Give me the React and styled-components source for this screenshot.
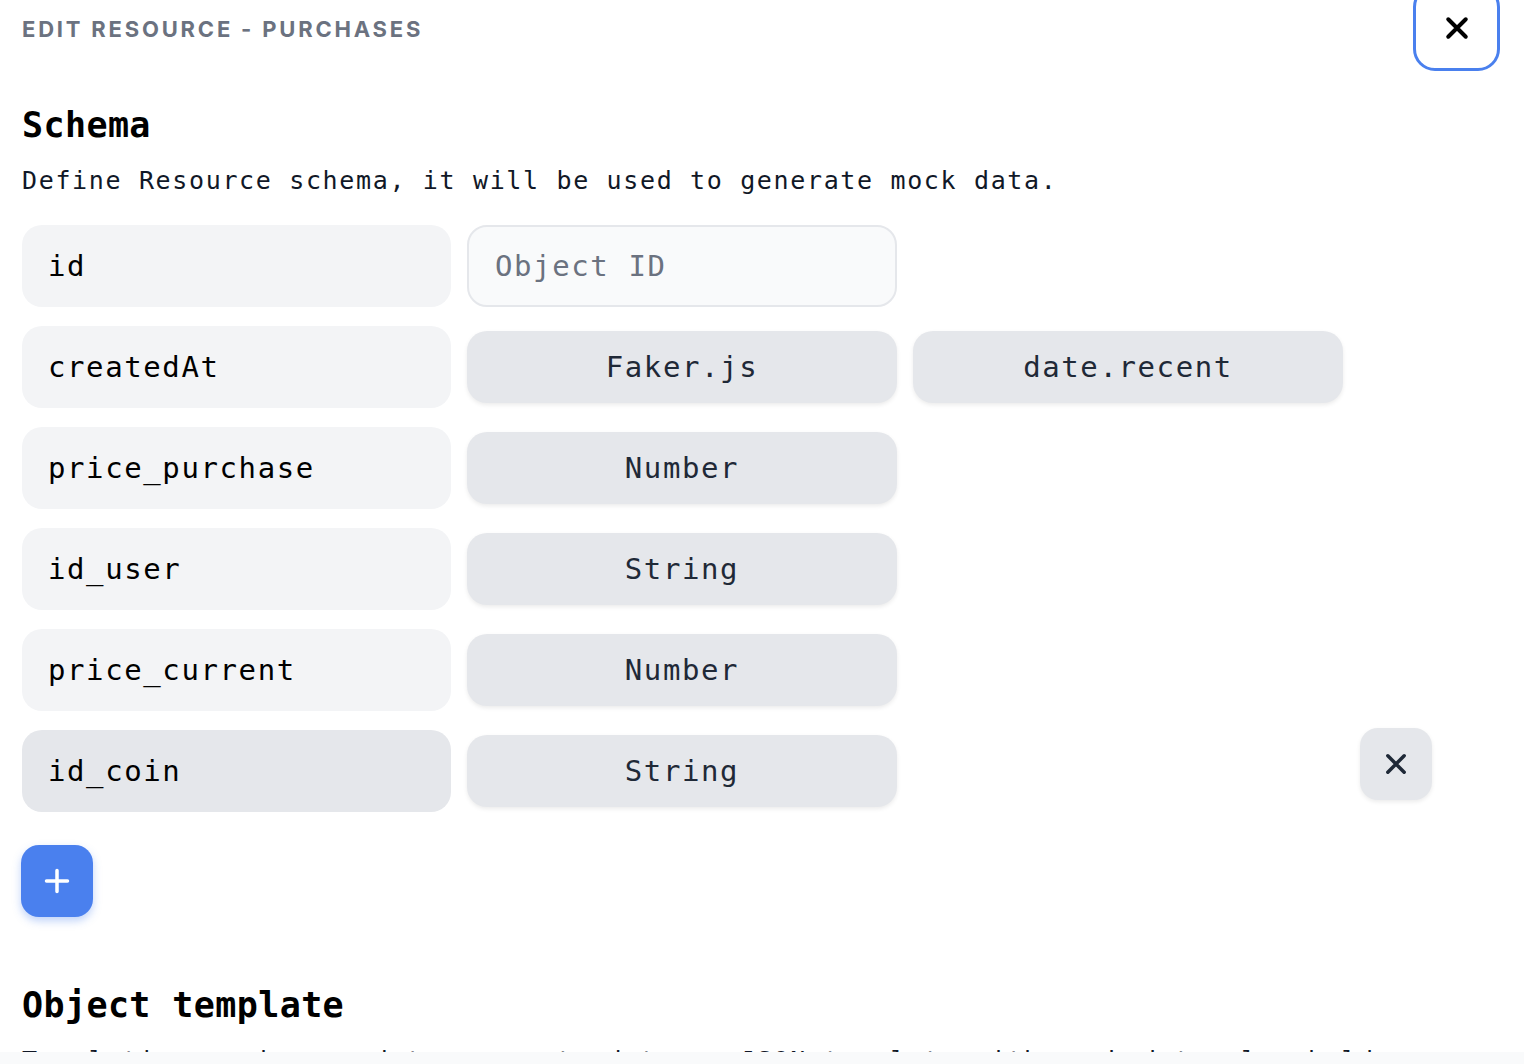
import React from "react";
import styled, { createGlobalStyle } from "styled-components";

const GlobalStyle = createGlobalStyle`
  html, body {
    margin: 0;
    padding: 0;
    background: #ffffff;
    overflow: hidden;
  }
  * {
    box-sizing: border-box;
  }
`;

const mono = `"DejaVu Sans Mono", "Liberation Mono", monospace`;

const Page = styled.div`
  padding: 0 24px 0 22px;
  font-family: ${mono};
  color: #111827;
`;

const Header = styled.div`
  display: flex;
  align-items: center;
  justify-content: space-between;
  height: 86px;
  margin-top: -15px;
`;

const Title = styled.h1`
  margin: 0;
  font-family: Inter, "Liberation Sans", sans-serif;
  font-size: 22px;
  font-weight: 700;
  letter-spacing: 2.8px;
  text-transform: uppercase;
  color: #6b7280;
  padding-top: 1px;
`;

const CloseButton = styled.button`
  width: 87px;
  height: 86px;
  border: 3px solid #4a80ee;
  border-radius: 22px;
  background: #ffffff;
  display: flex;
  align-items: center;
  justify-content: center;
  padding: 0;
  cursor: pointer;
`;

const SectionTitle = styled.h2`
  margin: ${(p) => p.$top || "0"} 0 0 0;
  font-family: ${mono};
  font-size: 35px;
  font-weight: 700;
  letter-spacing: 0.4px;
  color: #000000;
  line-height: 44px;
`;

const Description = styled.p`
  margin: 18px 0 0 0;
  font-size: 25px;
  letter-spacing: 1.65px;
  line-height: 32px;
  color: #111827;
`;

const Rows = styled.div`
  display: flex;
  flex-direction: column;
  gap: 19px;
  margin-top: 28px;
`;

const Row = styled.div`
  display: flex;
  align-items: center;
  gap: 16px;
  height: 82px;
`;

const FieldName = styled.div`
  flex: 0 0 429px;
  height: 82px;
  display: flex;
  align-items: center;
  padding: 0 26px;
  border-radius: 20px;
  background: ${(p) => (p.$active ? "#e5e7eb" : "#f3f4f6")};
  font-size: 29px;
  letter-spacing: 1.6px;
  color: #000000;
`;

const TextInput = styled.div`
  flex: 0 0 430px;
  height: 82px;
  display: flex;
  align-items: center;
  padding: 0 26px;
  border-radius: 20px;
  border: 2px solid #e5e7eb;
  background: #f9fafb;
  font-size: 29px;
  letter-spacing: 1.6px;
  color: #6b7280;
`;

const TypeButton = styled.button`
  flex: 0 0 430px;
  height: 72px;
  border: none;
  border-radius: 20px;
  background: #e5e7eb;
  box-shadow: 0 2px 4px rgba(0, 0, 0, 0.08);
  font-family: ${mono};
  font-size: 29px;
  letter-spacing: 1.6px;
  color: #1f2937;
  display: flex;
  align-items: center;
  justify-content: center;
  padding: 0;
`;

const Spacer = styled.div`
  flex: 1;
`;

const DeleteButton = styled.button`
  flex: 0 0 72px;
  height: 72px;
  align-self: flex-start;
  margin-top: -2px;
  margin-right: 68px;
  border: none;
  border-radius: 18px;
  background: #e5e7eb;
  box-shadow: 0 2px 4px rgba(0, 0, 0, 0.08);
  display: flex;
  align-items: center;
  justify-content: center;
  padding: 0;
`;

const AddButton = styled.button`
  margin-top: 33px;
  margin-left: -1px;
  width: 72px;
  height: 72px;
  border: none;
  border-radius: 18px;
  background: #4a80ee;
  box-shadow: 0 4px 8px rgba(74, 128, 238, 0.35);
  display: flex;
  align-items: center;
  justify-content: center;
  padding: 0;
`;

const Footer = styled.div`
  position: fixed;
  left: 0;
  right: 0;
  bottom: 0;
  height: 12px;
  background: #f9fafb;
`;

const XIcon = ({ size = 28, color = "#000", width = 3.2 }) => (
  <svg width={size} height={size} viewBox="0 0 24 24" fill="none">
    <path
      d="M5 5 L19 19 M19 5 L5 19"
      stroke={color}
      strokeWidth={width}
      strokeLinecap="round"
    />
  </svg>
);

const PlusIcon = () => (
  <svg width="28" height="28" viewBox="0 0 24 24" fill="none">
    <path
      d="M12 3 V21 M3 12 H21"
      stroke="#ffffff"
      strokeWidth="3"
      strokeLinecap="round"
    />
  </svg>
);

const schema = [
  { name: "createdAt", type: "Faker.js", extra: "date.recent" },
  { name: "price_purchase", type: "Number" },
  { name: "id_user", type: "String" },
  { name: "price_current", type: "Number" },
  { name: "id_coin", type: "String", active: true },
];

export default function App() {
  return (
    <>
      <GlobalStyle />
      <Page>
        <Header>
          <Title>Edit resource - purchases</Title>
          <CloseButton>
            <XIcon size={30} color="#000" width={3.2} />
          </CloseButton>
        </Header>

        <SectionTitle $top="32px">Schema</SectionTitle>
        <Description>
          Define Resource schema, it will be used to generate mock data.
        </Description>

        <Rows>
          <Row>
            <FieldName>id</FieldName>
            <TextInput>Object ID</TextInput>
          </Row>
          {schema.map((item) => (
            <Row key={item.name}>
              <FieldName $active={item.active}>{item.name}</FieldName>
              <TypeButton>{item.type}</TypeButton>
              {item.extra ? <TypeButton>{item.extra}</TypeButton> : null}
              {item.active ? (
                <>
                  <Spacer />
                  <DeleteButton>
                    <XIcon size={28} color="#1f2937" width={3} />
                  </DeleteButton>
                </>
              ) : null}
            </Row>
          ))}
        </Rows>

        <AddButton>
          <PlusIcon />
        </AddButton>

        <SectionTitle $top="66px">Object template</SectionTitle>
        <Description>
          Templating engine used to generate data as JSON template with mock
          data placeholders.
        </Description>
      </Page>
      <Footer />
    </>
  );
}
